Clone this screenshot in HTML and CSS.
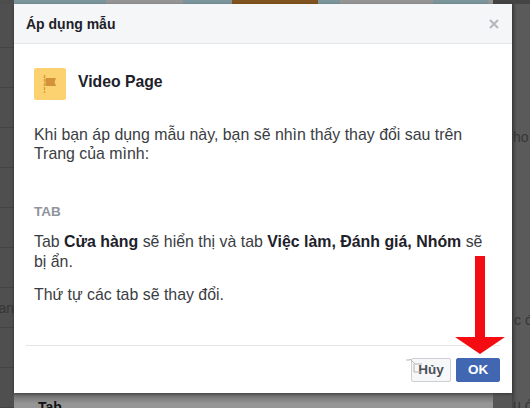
FILE: index.html
```html
<!DOCTYPE html>
<html lang="vi">
<head>
    <meta charset="UTF-8">
    <title>Áp dụng mẫu</title>
    <link rel="stylesheet" href="styles.css">
</head>
<body>
    <div class="cover-strip">
        <span class="cover-dark"></span>
        <span class="cover-blue"></span>
        <span class="cover-gray"></span>
        <span class="cover-blue-2"></span>
        <span class="cover-brown"></span>
        <span class="cover-blue-3"></span>
        <span class="cover-gray-2"></span>
        <span class="cover-blue-4"></span>
        <span class="cover-gray-3"></span>
        <span class="cover-dark-2"></span>
    </div>

    <div class="side side-left"></div>
    <div class="side side-right"></div>
    <div class="bottom-row"></div>

    <span class="peek peek-left">ran</span>
    <span class="peek peek-right-0">ho T</span>
    <span class="peek peek-right-1">c đ</span>
    <span class="peek peek-right-2">u ớ</span>
    <span class="peek peek-bottom">Tab</span>

    <div class="dialog">
        <div class="dialog-header">
            <span class="dialog-title">Áp dụng mẫu</span>
            <svg class="close-icon" width="10" height="10" viewBox="0 0 10 10">
                <path d="M1 1L9 9M9 1L1 9" stroke="#b4b7bc" stroke-width="2" fill="none"/>
            </svg>
        </div>

        <div class="dialog-body">
            <div class="template">
                <div class="template-icon">
                    <svg width="14" height="18" viewBox="0 0 14 18">
                        <path d="M1.5 0V18" stroke="#d99a3c" stroke-width="1.4" stroke-dasharray="3 1" fill="none"/>
                        <path d="M2.5 3H13L11.5 7L13 11H2.5Z" fill="#d3923a"/>
                    </svg>
                </div>
                <span class="template-name">Video Page</span>
            </div>

            <p class="intro">Khi bạn áp dụng mẫu này, bạn sẽ nhìn thấy thay đổi sau trên Trang của mình:</p>

            <h4 class="section-label">TAB</h4>
            <p class="change">Tab <b>Cửa hàng</b> sẽ hiển thị và tab <b>Việc làm, Đánh giá, Nhóm</b> sẽ bị ẩn.</p>
            <p class="change">Thứ tự các tab sẽ thay đổi.</p>
        </div>

        <div class="dialog-footer">
            <button class="btn btn-cancel">Hủy</button>
            <button class="btn btn-ok">OK</button>
        </div>
    </div>

    <svg class="cursor-mark" width="18" height="16" viewBox="0 0 18 16">
        <path d="M1 2H5V1L10 6H17M9 6V14H17" stroke="#b5b5b5" stroke-width="1" fill="none"/>
    </svg>

    <svg class="red-arrow" width="50" height="98" viewBox="0 0 50 98">
        <path d="M20 0H30V81H50L25 98L0 81H20Z" fill="#f40c12"/>
    </svg>
</body>
</html>
```

FILE: styles.css
```css
html, body {
    margin: 0;
    height: 100%;
}

body {
    width: 530px;
    height: 408px;
    position: relative;
    overflow: hidden;
    background: #565656;
    font-family: "Liberation Sans", Arial, sans-serif;
    color: #1d2129;
}

.cover-strip {
    position: absolute;
    top: 0;
    left: 0;
    width: 100%;
    height: 4px;
    display: flex;
}

.cover-strip span { display: block; height: 100%; }
.cover-dark { width: 14px; background: #4d4d4d; }
.cover-blue { width: 92px; background: #7b959c; }
.cover-gray { width: 77px; background: #959595; }
.cover-blue-2 { width: 49px; background: #7b959c; }
.cover-brown { width: 86px; background: #80531f; }
.cover-blue-3 { width: 22px; background: #7b959c; }
.cover-gray-2 { width: 93px; background: #959595; }
.cover-blue-4 { width: 55px; background: #7b959c; }
.cover-gray-3 { width: 5px; background: #959595; }
.cover-dark-2 { flex: 1; background: #444; }

.side {
    position: absolute;
    top: 4px;
    height: 404px;
}

.side-left {
    left: 0;
    width: 14px;
    background: repeating-linear-gradient(to bottom, #4f4f4f 0, #4f4f4f 39px, #444 39px, #444 40px) 0 4px;
}

.side-right {
    left: 512px;
    width: 18px;
    background: linear-gradient(to right, #444, #5a5a5a 5px);
}

.bottom-row {
    position: absolute;
    left: 14px;
    top: 393px;
    width: 479px;
    height: 15px;
    background: linear-gradient(to bottom, #666, #959595 70%);
}

.peek {
    position: absolute;
    font-size: 14px;
    white-space: nowrap;
    color: #363636;
}

.peek-left { right: 516px; top: 300px; }
.peek-right-0 { left: 513px; top: 129px; }
.peek-right-1 { left: 514px; top: 312px; }
.peek-right-2 { left: 513px; top: 397px; }
.peek-bottom { left: 38px; top: 399px; font-weight: bold; color: #111; }

.dialog {
    position: absolute;
    top: 4px;
    left: 14px;
    width: 498px;
    height: 389px;
    display: flex;
    flex-direction: column;
    background: #fff;
    box-shadow: 0 1px 3px rgba(0, 0, 0, 0.4);
}

.dialog-header {
    height: 39px;
    flex: none;
    display: flex;
    align-items: center;
    justify-content: space-between;
    padding: 0 13px 0 12px;
    background: #f5f6f7;
    border-bottom: 1px solid #e5e5e5;
}

.dialog-title {
    font-size: 14px;
    font-weight: bold;
}

.dialog-body {
    flex: 1;
    margin: 0 12px;
    padding: 24px 8px 0;
    border-bottom: 1px solid #e5e5e5;
}

.template {
    display: flex;
    align-items: center;
    gap: 12px;
}

.template-icon {
    width: 32px;
    height: 32px;
    display: flex;
    align-items: center;
    justify-content: center;
    background: #fbd26f;
    border-radius: 2px;
}

.template-name {
    font-size: 15.75px;
    font-weight: bold;
    padding-bottom: 4px;
}

.intro, .change {
    margin: 0;
    font-size: 15.9px;
    line-height: 19px;
    color: #3a3d42;
}

.intro { margin-top: 25px; }

.section-label {
    margin: 41px 0 0;
    font-size: 13.5px;
    color: #90949c;
}

.change { margin-top: 13px; line-height: 20px; }
.change b { color: #1d2129; }

.dialog-footer {
    height: 47px;
    flex: none;
    display: flex;
    align-items: center;
    justify-content: flex-end;
    gap: 5px;
    padding: 0 12px 0 0;
}

.btn {
    height: 24px;
    padding: 0;
    border-radius: 2px;
    font-family: inherit;
    font-size: 13.5px;
    font-weight: bold;
}

.btn-cancel {
    width: 40px;
    color: #4b4f56;
    background: #f6f7f9;
    border: 1px solid #ced0d4;
}

.btn-ok {
    width: 44px;
    color: #fff;
    background: #4267b2;
    border: 1px solid #4267b2;
}

.cursor-mark {
    position: absolute;
    left: 405px;
    top: 358px;
}

.red-arrow {
    position: absolute;
    left: 455px;
    top: 256px;
}
```
